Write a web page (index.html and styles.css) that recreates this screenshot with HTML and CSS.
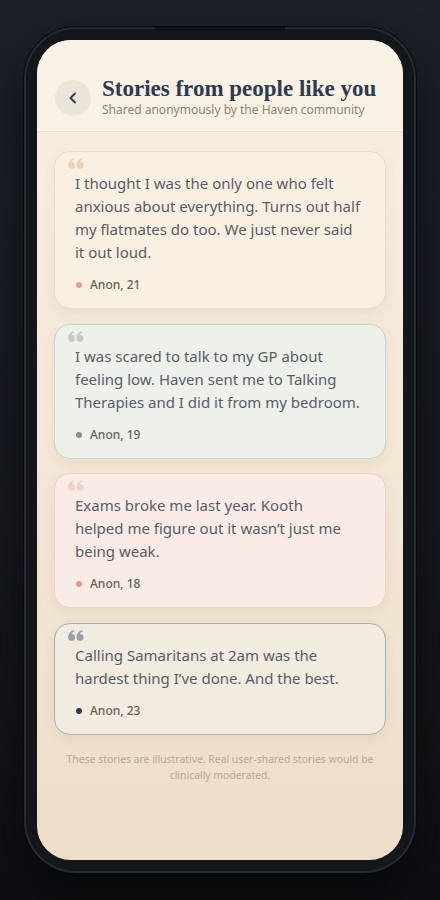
FILE: index.html
```html
<!DOCTYPE html>
<html lang="en">
<head>
  <meta charset="UTF-8">
  <title>Stories from people like you</title>
  <link rel="stylesheet" href="styles.css">
</head>
<body>

  <div class="phone">
    <div class="notch"></div>
    <div class="screen">

      <header class="top">
        <button class="back" aria-label="Back">
          <svg width="16" height="16" viewBox="0 0 16 16" fill="none">
            <path d="M10 3.5 L5.5 8 L10 12.5" stroke="#2c3e50" stroke-width="1.8" stroke-linecap="round" stroke-linejoin="round"/>
          </svg>
        </button>
        <div class="titles">
          <h1>Stories from people like you</h1>
          <p>Shared anonymously by the Haven community</p>
        </div>
      </header>

      <main class="stories">
        <div class="story peach">
          <svg class="quote" viewBox="0 0 16 11"><use href="#q"/></svg>
          <p>I thought I was the only one who felt anxious about everything. Turns out half my flatmates do too. We just never said it out loud.</p>
          <div class="who"><span class="dot"></span>Anon, 21</div>
        </div>

        <div class="story sage">
          <svg class="quote" viewBox="0 0 16 11"><use href="#q"/></svg>
          <p>I was scared to talk to my GP about feeling low. Haven sent me to Talking Therapies and I did it from my bedroom.</p>
          <div class="who"><span class="dot"></span>Anon, 19</div>
        </div>

        <div class="story rose">
          <svg class="quote" viewBox="0 0 16 11"><use href="#q"/></svg>
          <p>Exams broke me last year. Kooth<br>helped me figure out it wasn&rsquo;t just me being weak.</p>
          <div class="who"><span class="dot"></span>Anon, 18</div>
        </div>

        <div class="story slate">
          <svg class="quote" viewBox="0 0 16 11"><use href="#q"/></svg>
          <p>Calling Samaritans at 2am was the hardest thing I&rsquo;ve done. And the best.</p>
          <div class="who"><span class="dot"></span>Anon, 23</div>
        </div>

        <p class="note">These stories are illustrative. Real user-shared stories would be clinically moderated.</p>
      </main>

    </div>
  </div>

  <svg width="0" height="0" style="position:absolute">
    <defs>
      <g id="q">
        <circle cx="3.7" cy="7.4" r="3.4"/>
        <path d="M0.3 7.4 C0 4.2 1.8 1.4 5.6 0 L6.2 1.2 C4 2.3 3.1 3.8 3.3 5.6 Z"/>
        <circle cx="12.1" cy="7.4" r="3.4"/>
        <path d="M8.7 7.4 C8.4 4.2 10.2 1.4 14 0 L14.6 1.2 C12.4 2.3 11.5 3.8 11.7 5.6 Z"/>
      </g>
    </defs>
  </svg>

</body>
</html>
```

FILE: styles.css
```css
html, body {
  margin: 0;
  height: 100%;
}

body {
  background: linear-gradient(180deg, #1c2028 0%, #15181e 60%, #0d0f12 100%);
  font-family: 'Noto Sans', sans-serif;
  padding-top: 27px;
  box-sizing: border-box;
}

.phone {
  position: relative;
  width: 392px;
  height: 846px;
  margin: 0 auto;
  box-sizing: border-box;
  padding: 11px;
  border: 2px solid #262a31;
  border-radius: 52px;
  background: #13161b;
  box-shadow: 0 0 0 1px #08090b, 0 20px 40px rgba(0,0,0,0.5);
}

.notch {
  position: absolute;
  top: -2px;
  left: 50%;
  width: 130px;
  height: 4px;
  margin-left: -65px;
  background: #0f1114;
}

.screen {
  height: 100%;
  border-radius: 34px;
  overflow: hidden;
  background: linear-gradient(180deg, #f8efe2 0%, #f3e7d6 50%, #ecdec8 100%);
  display: flex;
  flex-direction: column;
}

.top {
  display: flex;
  align-items: center;
  gap: 11px;
  padding: 37px 18px 13px;
  background: #faf1e5;
  border-bottom: 1px solid #eadfcd;
}

.back {
  width: 36px;
  height: 36px;
  flex: none;
  border: none;
  border-radius: 50%;
  background: #ece5da;
  display: flex;
  align-items: center;
  justify-content: center;
  padding: 0;
}

.titles h1 {
  margin: 0;
  font-family: 'Liberation Serif', serif;
  font-size: 23px;
  line-height: 24px;
  font-weight: bold;
  color: #2c3b50;
}

.titles p {
  margin: 0;
  font-size: 12px;
  line-height: 17px;
  color: #8c8378;
}

.stories {
  padding: 19px 17px 0;
  display: flex;
  flex-direction: column;
  gap: 14.5px;
}

.story {
  position: relative;
  padding: 20px 20px 15px;
  border: 1px solid;
  border-radius: 16px;
  box-shadow: 0 4px 12px rgba(120, 90, 50, 0.08);
}

.story p {
  margin: 0;
  font-size: 15px;
  line-height: 23px;
  color: #575d68;
}

.quote {
  position: absolute;
  top: 6px;
  left: 13px;
  width: 16px;
  height: 11px;
  fill: currentColor;
}

.who {
  display: flex;
  align-items: center;
  gap: 8px;
  margin-top: 13px;
  font-size: 12px;
  line-height: 16px;
  font-weight: 500;
  color: #6b5f55;
  padding-left: 1px;
}

.dot {
  width: 6px;
  height: 6px;
  border-radius: 50%;
}

.peach { background: #faf0e2; border-color: #f1dac6; }
.peach .quote { color: #f0cfb6; }
.peach .dot { background: #e2a086; }

.sage { background: #eef0ea; border-color: #ced4c9; }
.sage .quote { color: #c7cac2; }
.sage .dot { background: #8c8f84; }

.rose { background: #f9ece7; border-color: #f0d2ca; }
.rose .quote { color: #efd1c8; }
.rose .dot { background: #e09c86; }

.slate { background: #f1ebe0; border-color: #a9acb1; }
.slate .quote { color: #9c9fa3; }
.slate .dot { background: #2c3b50; }

.note {
  margin: 2px 4px 0;
  text-align: center;
  font-size: 10.4px;
  line-height: 16px;
  color: #b3a898;
}
```
